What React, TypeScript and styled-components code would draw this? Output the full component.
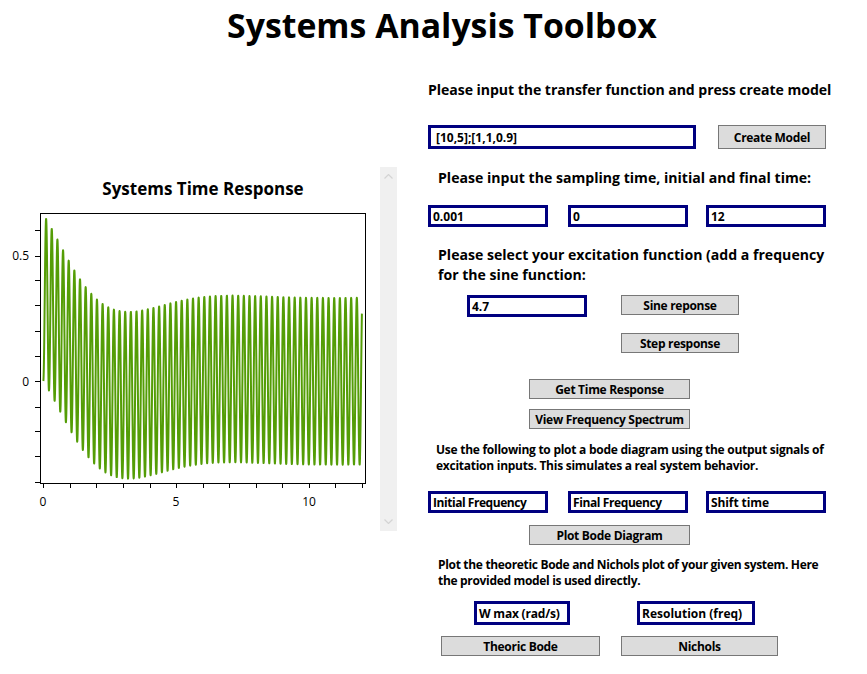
import React from "react";
import styled, { createGlobalStyle } from "styled-components";

const Global = createGlobalStyle`
  html, body { margin: 0; padding: 0; background: #fff; }
  body { font-family: "Open Sans", "Noto Sans", sans-serif; color: #000; }
`;

const Page = styled.div`
  width: 867px;
  height: 674px;
  overflow: hidden;
`;
const Title = styled.h1`
  margin: 0;
  height: 78px;
  padding: 0 0 0 17px;
  box-sizing: border-box;
  text-align: center;
  font-size: 33.8px;
  line-height: 50px;
  font-weight: 700;
`;
const Main = styled.div`
  display: grid;
  grid-template-columns: 428px 1fr;
`;
const LeftPane = styled.div`
  display: flex;
  align-items: flex-start;
  padding-top: 89px;
`;
const PlotPane = styled.div`
  width: 380px;
  padding-top: 8px;
`;
const PlotTitle = styled.div`
  padding-left: 26px;
  height: 28px;
  text-align: center;
  font-size: 17px;
  line-height: 28px;
  font-weight: 700;
`;
const Plot = styled.svg`
  display: block;
`;
const TickLabel = styled.text`
  font-family: "Open Sans", sans-serif;
  font-size: 12px;
  fill: #000;
`;
const Scrollbar = styled.div`
  width: 17px;
  height: 364px;
  background: #f0f0f0;
  display: flex;
  flex-direction: column;
  justify-content: space-between;
  align-items: center;
  padding: 7px 0;
  box-sizing: border-box;
`;
const RightPane = styled.div`
  display: flex;
  flex-direction: column;
`;
const Heading = styled.div<{ $top: number; $left?: number; $track?: number }>`
  margin-top: ${(p) => p.$top}px;
  padding-left: ${(p) => p.$left ?? 0}px;
  font-size: 14.1px;
  letter-spacing: ${(p) => p.$track ?? 0}px;
  line-height: 20px;
  font-weight: 700;
  white-space: nowrap;
`;
const Note = styled.div<{ $top: number; $left: number; $track: number }>`
  margin-top: ${(p) => p.$top}px;
  padding-left: ${(p) => p.$left}px;
  font-size: 12px;
  letter-spacing: ${(p) => p.$track}px;
  line-height: 16px;
  font-weight: 700;
  white-space: nowrap;
`;
const Row = styled.div<{ $top: number; $left?: number; $gap?: number }>`
  display: flex;
  align-items: flex-start;
  margin-top: ${(p) => p.$top}px;
  padding-left: ${(p) => p.$left ?? 0}px;
  gap: ${(p) => p.$gap ?? 0}px;
`;
const Field = styled.div<{ $w: number; $h?: number; $pad?: number; $track?: number; $shift?: number }>`
  width: ${(p) => p.$w}px;
  height: ${(p) => p.$h ?? 22}px;
  margin-left: ${(p) => p.$shift ?? 0}px;
  box-sizing: border-box;
  border: 3px solid #000080;
  padding: 1px 0 0 ${(p) => p.$pad ?? 2}px;
  font-size: 12px;
  letter-spacing: ${(p) => p.$track ?? 0}px;
  line-height: ${(p) => (p.$h ?? 22) - 6}px;
  font-weight: 700;
  white-space: nowrap;
  overflow: hidden;
  background: #fff;
`;
const Button = styled.button<{ $w: number; $h?: number }>`
  width: ${(p) => p.$w}px;
  height: ${(p) => p.$h ?? 20}px;
  box-sizing: border-box;
  border: 1px solid #777;
  border-radius: 0;
  background: #dcdcdc;
  padding: 1px 0 0;
  font-family: inherit;
  font-size: 12px;
  letter-spacing: -0.3px;
  line-height: 17px;
  font-weight: 700;
  color: #000;
`;

const simulate = () => {
  const dt = 0.001;
  const w = 2 * Math.PI * 4.7;
  let x1 = 0;
  let x2 = 0;
  const pts: string[] = [];
  for (let i = 0; i <= 12000; i++) {
    const t = i * dt;
    if (i % 4 === 0) {
      const y = 5 * x1 + 10 * x2;
      pts.push(`${(43.3 + 26.55 * t).toFixed(2)},${(178 - 246 * y).toFixed(2)}`);
    }
    const u = Math.sin(w * t);
    const d1 = x2;
    const d2 = -0.9 * x1 - x2 + u;
    x1 += d1 * dt;
    x2 += d2 * dt;
  }
  return pts.join(" ");
};

const yTicks = [27, 52.6, 77, 102, 128, 153, 178, 203.6, 228, 253, 278.6];
const xTicks = Array.from({ length: 13 }, (_, i) => 43.3 + 26.55 * i);

const Chart = () => (
  <Plot width={380} height={328} viewBox="0 0 380 328">
    <polyline points={simulate()} fill="none" stroke="#549d06" strokeWidth={2} strokeLinejoin="round" />
    <rect x={40.5} y={10.5} width={325} height={270} fill="none" stroke="#000" strokeWidth={1} />
    {yTicks.map((y) => (
      <line key={y} x1={35} x2={40} y1={Math.round(y) + 0.5} y2={Math.round(y) + 0.5} stroke="#000" />
    ))}
    {xTicks.map((x) => (
      <line key={x} x1={Math.round(x) + 0.5} x2={Math.round(x) + 0.5} y1={281} y2={285} stroke="#000" />
    ))}
    <TickLabel x={29} y={57} textAnchor="end">0.5</TickLabel>
    <TickLabel x={29} y={183} textAnchor="end">0</TickLabel>
    <TickLabel x={43} y={303} textAnchor="middle">0</TickLabel>
    <TickLabel x={176} y={303} textAnchor="middle">5</TickLabel>
    <TickLabel x={309} y={303} textAnchor="middle">10</TickLabel>
  </Plot>
);

const Chevron = ({ d }: { d: string }) => (
  <svg width="9" height="5" viewBox="0 0 9 5">
    <polyline points={d} fill="none" stroke="#d4d4d4" strokeWidth="1.2" />
  </svg>
);

export default function App() {
  return (
    <Page>
      <Global />
      <Title>Systems Analysis Toolbox</Title>
      <Main>
        <LeftPane>
          <PlotPane>
            <PlotTitle>Systems Time Response</PlotTitle>
            <Chart />
          </PlotPane>
          <Scrollbar>
            <Chevron d="0.5,4.5 4.5,0.5 8.5,4.5" />
            <Chevron d="0.5,0.5 4.5,4.5 8.5,0.5" />
          </Scrollbar>
        </LeftPane>
        <RightPane>
          <Heading $top={2} $track={-0.06}>Please input the transfer function and press create model</Heading>
          <Row $top={25} $gap={22}>
            <Field $w={268} $h={24} $pad={5}>[10,5];[1,1,0.9]</Field>
            <Button $w={108} $h={24}>Create Model</Button>
          </Row>
          <Heading $top={19} $left={10}>Please input the sampling time, initial and final time:</Heading>
          <Row $top={17} $gap={20}>
            <Field $w={120}>0.001</Field>
            <Field $w={120}>0</Field>
            <Field $w={120} $shift={-2}>12</Field>
          </Row>
          <Heading $top={18} $left={10}>
            Please select your excitation function (add a frequency
            <br />
            for the sine function:
          </Heading>
          <Row $top={10} $left={39} $gap={34}>
            <Field $w={120}>4.7</Field>
            <Button $w={118}>Sine reponse</Button>
          </Row>
          <Row $top={16} $left={193}>
            <Button $w={118}>Step response</Button>
          </Row>
          <Row $top={26} $left={101}>
            <Button $w={161}>Get Time Response</Button>
          </Row>
          <Row $top={10} $left={101}>
            <Button $w={161}>View Frequency Spectrum</Button>
          </Row>
          <Note $top={13} $left={8} $track={-0.26}>
            Use the following to plot a bode diagram using the output signals of
            <br />
            excitation inputs. This simulates a real system behavior.
          </Note>
          <Row $top={17} $gap={20}>
            <Field $w={120} $track={-0.45}>Initial Frequency</Field>
            <Field $w={120} $track={-0.4}>Final Frequency</Field>
            <Field $w={120} $shift={-2} $track={-0.1}>Shift time</Field>
          </Row>
          <Row $top={12} $left={101}>
            <Button $w={161}>Plot Bode Diagram</Button>
          </Row>
          <Note $top={12} $left={10} $track={-0.32}>
            Plot the theoretic Bode and Nichols plot of your given system. Here
            <br />
            the provided model is used directly.
          </Note>
          <Row $top={12} $left={46} $gap={67}>
            <Field $w={96} $h={24} $track={-0.2}>W max (rad/s)</Field>
            <Field $w={118} $h={24}>Resolution (freq)</Field>
          </Row>
          <Row $top={11} $left={13} $gap={21}>
            <Button $w={159}>Theoric Bode</Button>
            <Button $w={157}>Nichols</Button>
          </Row>
        </RightPane>
      </Main>
    </Page>
  );
}
